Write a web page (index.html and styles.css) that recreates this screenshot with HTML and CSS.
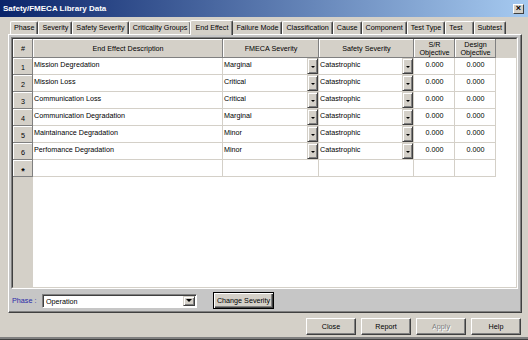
FILE: index.html
```html
<!DOCTYPE html>
<html>
<head>
    <title>Safety/FMECA Library Data</title>
    <link rel="stylesheet" href="styles.css">
</head>
<body>
    <div class="window">
        <div class="titlebar">
            <span class="title">Safety/FMECA Library Data</span>
            <span class="close-box">&times;</span>
        </div>

        <div class="tabs">
            <div class="tab">Phase</div>
            <div class="tab">Severity</div>
            <div class="tab">Safety Severity</div>
            <div class="tab">Criticality Groups</div>
            <div class="tab active">End Effect</div>
            <div class="tab">Failure Mode</div>
            <div class="tab">Classification</div>
            <div class="tab">Cause</div>
            <div class="tab">Component</div>
            <div class="tab">Test Type</div>
            <div class="tab tab-wide">Test</div>
            <div class="tab">Subtest</div>
        </div>

        <div class="page">
            <div class="grid">
                <div class="grid-inner">
                    <div class="row head">
                        <div class="hcell">#</div>
                        <div class="hcell">End Effect Description</div>
                        <div class="hcell">FMECA Severity</div>
                        <div class="hcell">Safety Severity</div>
                        <div class="hcell">S/R<br>Objective</div>
                        <div class="hcell">Design<br>Objective</div>
                        <div class="hfill"></div>
                    </div>

                    <div class="row">
                        <div class="rh">1</div>
                        <div class="cell">Mission Degredation</div>
                        <div class="cell combo"><span class="val">Marginal</span><span class="drop"></span></div>
                        <div class="cell combo"><span class="val">Catastrophic</span><span class="drop"></span></div>
                        <div class="cell num">0.000</div>
                        <div class="cell num">0.000</div>
                        <div class="fill"></div>
                    </div>
                    <div class="row">
                        <div class="rh">2</div>
                        <div class="cell">Mission Loss</div>
                        <div class="cell combo"><span class="val">Critical</span><span class="drop"></span></div>
                        <div class="cell combo"><span class="val">Catastrophic</span><span class="drop"></span></div>
                        <div class="cell num">0.000</div>
                        <div class="cell num">0.000</div>
                        <div class="fill"></div>
                    </div>
                    <div class="row">
                        <div class="rh">3</div>
                        <div class="cell">Communication Loss</div>
                        <div class="cell combo"><span class="val">Critical</span><span class="drop"></span></div>
                        <div class="cell combo"><span class="val">Catastrophic</span><span class="drop"></span></div>
                        <div class="cell num">0.000</div>
                        <div class="cell num">0.000</div>
                        <div class="fill"></div>
                    </div>
                    <div class="row">
                        <div class="rh">4</div>
                        <div class="cell">Communication Degradation</div>
                        <div class="cell combo"><span class="val">Marginal</span><span class="drop"></span></div>
                        <div class="cell combo"><span class="val">Catastrophic</span><span class="drop"></span></div>
                        <div class="cell num">0.000</div>
                        <div class="cell num">0.000</div>
                        <div class="fill"></div>
                    </div>
                    <div class="row">
                        <div class="rh">5</div>
                        <div class="cell">Maintainance Degradation</div>
                        <div class="cell combo"><span class="val">Minor</span><span class="drop"></span></div>
                        <div class="cell combo"><span class="val">Catastrophic</span><span class="drop"></span></div>
                        <div class="cell num">0.000</div>
                        <div class="cell num">0.000</div>
                        <div class="fill"></div>
                    </div>
                    <div class="row">
                        <div class="rh">6</div>
                        <div class="cell">Perfomance Degradation</div>
                        <div class="cell combo"><span class="val">Minor</span><span class="drop"></span></div>
                        <div class="cell combo"><span class="val">Catastrophic</span><span class="drop"></span></div>
                        <div class="cell num">0.000</div>
                        <div class="cell num">0.000</div>
                        <div class="fill"></div>
                    </div>
                    <div class="row">
                        <div class="rh new">*</div>
                        <div class="cell"></div>
                        <div class="cell"></div>
                        <div class="cell"></div>
                        <div class="cell"></div>
                        <div class="cell"></div>
                        <div class="fill"></div>
                    </div>
                </div>
            </div>

            <div class="phase-row">
                <span class="phase-label">Phase :</span>
                <div class="combo-box">
                    <span class="combo-text">Operation</span>
                    <span class="combo-btn"></span>
                </div>
                <button class="btn default-btn">Change Severity</button>
            </div>
        </div>

        <div class="btn-bar">
            <button class="btn">Close</button>
            <button class="btn">Report</button>
            <button class="btn disabled">Apply</button>
            <button class="btn">Help</button>
        </div>
    </div>
</body>
</html>
```

FILE: styles.css
```css
* {
    box-sizing: border-box;
}

body {
    margin: 0;
    width: 528px;
    height: 340px;
    overflow: hidden;
    background-color: #d4d0c8;
    font-family: 'Liberation Sans', Arial, sans-serif;
    font-size: 7.2px;
    color: #000;
}

.window {
    display: flex;
    flex-direction: column;
    height: 340px;
    border-bottom: 1px solid #404040;
    box-shadow: inset 0 -2px #808080;
}

/* Title bar */
.titlebar {
    display: flex;
    align-items: center;
    justify-content: space-between;
    height: 17px;
    padding: 0 4px 0 3px;
    background: linear-gradient(to right, #0a246a, #a6caf0);
}

.title {
    color: #fff;
    font-weight: bold;
    font-size: 8px;
}

.close-box {
    width: 11px;
    height: 10px;
    background-color: #d4d0c8;
    border: 1px solid;
    border-color: #fff #404040 #404040 #fff;
    font-size: 9px;
    line-height: 7px;
    text-align: center;
    font-weight: bold;
}

/* Tabs */
.tabs {
    display: flex;
    align-items: flex-end;
    height: 16px;
    margin-top: 1px;
    padding-left: 10px;
}

.tab {
    height: 13px;
    padding: 0 3px;
    line-height: 12px;
    white-space: nowrap;
    border-top: 1px solid #fff;
    border-left: 1px solid #fff;
    border-right: 1px solid #404040;
    border-radius: 2px 2px 0 0;
    box-shadow: inset -1px 0 #808080;
}

.tab-wide {
    padding-right: 10px;
}

.tab.active {
    position: relative;
    z-index: 1;
    height: 15px;
    margin: 0 -1px -1px;
    padding: 1px 4px 0;
    background-color: #d4d0c8;
}

/* Tab page */
.page {
    width: 514px;
    height: 279px;
    margin-left: 8px;
    padding: 2px 3px 0 2px;
    border: 1px solid;
    border-color: #fff #404040 #404040 #fff;
    background-color: #c6c6c6;
    box-shadow: inset -1px -1px #808080;
}

.grid {
    display: flex;
    flex-direction: column;
    height: 252px;
    border: 1px solid;
    border-color: #808080 #fff #fff #808080;
}

.grid-inner {
    flex: 1;
    border: 1px solid;
    border-color: #404040 #d4d0c8 #d4d0c8 #404040;
    background-color: #ffffff;
    box-shadow: inset 20px 0 #d4d0c8;
}

.row {
    display: grid;
    grid-template-columns: 20px 190px 96px 95px 41px 41px 1fr;
    height: 17px;
}

.row.head {
    height: 19px;
    background-color: #d4d0c8;
}

.hcell {
    display: flex;
    align-items: center;
    justify-content: center;
    text-align: center;
    line-height: 8px;
    box-shadow: inset -1px -1px #808080, inset 1px 1px #fff;
}

.rh {
    display: flex;
    align-items: center;
    justify-content: center;
    padding-top: 2px;
    background-color: #d4d0c8;
    box-shadow: inset -1px -1px #808080, inset 1px 1px #fff;
}

.rh.new {
    font-size: 9px;
    font-weight: bold;
    padding-top: 5px;
}

.cell {
    padding: 2px 0 0 1px;
    line-height: 9px;
    white-space: nowrap;
    overflow: hidden;
    background-color: #fff;
    border-right: 1px solid #d4d0c8;
    border-bottom: 1px solid #d4d0c8;
}

.cell.num {
    text-align: center;
}

.cell.combo {
    display: flex;
    padding: 0;
}

.combo .val {
    flex: 1;
    padding: 2px 0 0 1px;
}

.drop {
    display: flex;
    align-items: center;
    justify-content: center;
    width: 11px;
    background-color: #d4d0c8;
    border: 1px solid;
    border-color: #d4d0c8 #404040 #404040 #d4d0c8;
    box-shadow: inset 1px 1px #fff, inset -1px -1px #808080;
}

.drop::after {
    content: "";
    margin-top: 2px;
    border-left: 2px solid transparent;
    border-right: 2px solid transparent;
    border-top: 2px solid #000;
}

.fill {
    background-color: #fff;
}

/* Phase row */
.phase-row {
    display: flex;
    align-items: center;
    height: 23px;
    padding-left: 1px;
}

.phase-label {
    width: 30px;
    color: #2a2aa8;
}

.combo-box {
    display: flex;
    width: 155px;
    height: 14px;
    background-color: #fff;
    border: 1px solid;
    border-color: #808080 #fff #fff #808080;
    box-shadow: inset 1px 1px #404040;
}

.combo-text {
    flex: 1;
    padding: 2px 0 0 3px;
}

.combo-btn {
    display: flex;
    align-items: center;
    justify-content: center;
    width: 12px;
    margin: 1px 1px 1px 0;
    background-color: #d4d0c8;
    border: 1px solid;
    border-color: #d4d0c8 #404040 #404040 #d4d0c8;
    box-shadow: inset 1px 1px #fff, inset -1px -1px #808080;
}

.combo-btn::after {
    content: "";
    border-left: 3px solid transparent;
    border-right: 3px solid transparent;
    border-top: 3px solid #000;
}

/* Buttons */
.btn {
    width: 50px;
    height: 17px;
    padding: 0;
    font-family: inherit;
    font-size: 7.2px;
    color: #000;
    background-color: #d4d0c8;
    border: 1px solid;
    border-color: #fff #404040 #404040 #fff;
    box-shadow: inset -1px -1px #808080;
}

.default-btn {
    width: 61px;
    margin-left: 16px;
    border: 1px solid #000;
    box-shadow: inset 1px 1px #fff, inset -1px -1px #404040, inset -2px -2px #808080;
}

.btn.disabled {
    color: #808080;
    text-shadow: 1px 1px #fff;
}

.btn-bar {
    display: flex;
    justify-content: flex-end;
    gap: 5px;
    margin-top: 5px;
    padding-right: 7px;
}
```
